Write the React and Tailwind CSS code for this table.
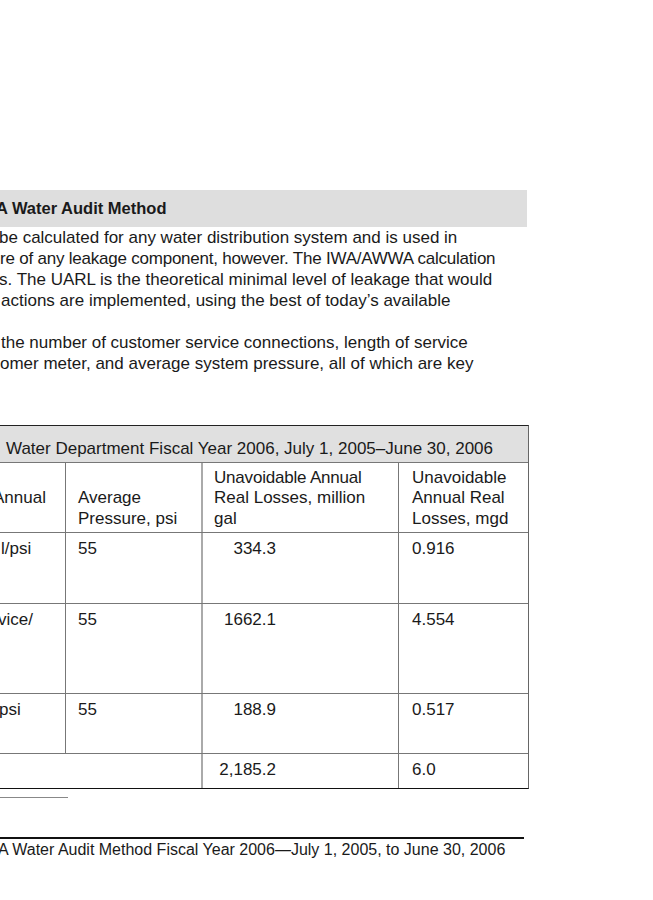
import React from "react";

const font = { fontFamily: '"Liberation Sans", Arial, sans-serif' };

function Line({ children, cls = "" }) {
  return (
    <div className={"h-[21px] leading-[21px] whitespace-nowrap " + cls}>{children}</div>
  );
}

export default function App() {
  return (
    <div
      className="w-[653px] h-[900px] bg-white overflow-hidden text-[#1a1a1a]"
      style={font}
    >
      <div className="pt-[190px]">
        {/* Heading bar */}
        <div className="w-[527px] h-[37px] bg-[#dedede] flex items-center overflow-hidden">
          <span className="ml-[-4px] text-[16.5px] font-bold whitespace-nowrap">
            A Water Audit Method
          </span>
        </div>

        {/* Body text */}
        <div className="text-[17px] overflow-hidden w-[653px]">
          <Line cls="ml-[-1px]">be calculated for any water distribution system and is used in</Line>
          <Line cls="tracking-[-0.22px]">re of any leakage component, however. The IWA/AWWA calculation</Line>
          <Line cls="ml-[-1px]">s. The UARL is the theoretical minimal level of leakage that would</Line>
          <Line cls="ml-[1px]">actions are implemented, using the best of today’s available</Line>
          <div className="h-[21px]" />
          <Line cls="ml-[1px]">the number of customer service connections, length of service</Line>
          <Line>omer meter, and average system pressure, all of which are key</Line>
        </div>

        {/* Table */}
        <div className="mt-[51px] w-[529px] text-[17px] leading-[20.5px] overflow-hidden">
          <div className="border-t border-t-[#222] border-r border-r-[#666] border-b-[1.5px] border-b-[#111]">
            {/* title row */}
            <div className="h-[37px] bg-[#e0e0e0] border-b border-b-[#777] pt-[13px] whitespace-nowrap leading-[20px]">
              <span className="ml-[6px]">Water Department Fiscal Year 2006, July 1, 2005–June 30, 2006</span>
            </div>
            {/* header row */}
            <div className="grid grid-cols-[65px_136px_197px_129px] h-[70px] border-b border-b-[#777]">
              <div className="flex flex-col justify-end pb-[3px] whitespace-nowrap">
                <span className="ml-[-7px]">Annual</span>
                <span>&nbsp;</span>
              </div>
              <div className="border-l border-l-[#777] flex flex-col justify-end pb-[3px] pl-[12px]">
                <span>Average</span>
                <span>Pressure, psi</span>
              </div>
              <div className="border-l-2 border-l-[#aaa] flex flex-col justify-end pb-[3px] pl-[11px] whitespace-nowrap">
                <span className="tracking-[-0.2px]">Unavoidable Annual</span>
                <span>Real Losses, million</span>
                <span>gal</span>
              </div>
              <div className="border-l border-l-[#777] flex flex-col justify-end pb-[3px] pl-[13px] whitespace-nowrap">
                <span>Unavoidable</span>
                <span>Annual Real</span>
                <span>Losses, mgd</span>
              </div>
            </div>
            {/* data rows */}
            {[
              { h: "h-[71px]", c1: "l/psi", m: "ml-[1px]", v: "334.3", d: "0.916" },
              { h: "h-[90px]", c1: "vice/", m: "ml-[-2px]", v: "1662.1", d: "4.554" },
              { h: "h-[60px]", c1: "psi", m: "ml-[-1px]", v: "188.9", d: "0.517" },
            ].map((r, i) => (
              <div
                key={i}
                className={"grid grid-cols-[65px_136px_197px_129px] border-b border-b-[#777] " + r.h}
              >
                <div className="pt-[6px] whitespace-nowrap">
                  <span className={"inline-block " + r.m}>{r.c1}</span>
                </div>
                <div className="border-l border-l-[#777] pt-[6px] pl-[12px]">55</div>
                <div className="border-l-2 border-l-[#aaa] pt-[6px] pl-[11px]">
                  <span className="inline-block w-[62px] text-right">{r.v}</span>
                </div>
                <div className="border-l border-l-[#777] pt-[6px] pl-[13px]">{r.d}</div>
              </div>
            ))}
            {/* total row */}
            <div className="grid grid-cols-[201px_197px_129px] h-[34px]">
              <div />
              <div className="border-l-2 border-l-[#aaa] pt-[6px] pl-[11px]">
                <span className="inline-block w-[62px] text-right">2,185.2</span>
              </div>
              <div className="border-l border-l-[#777] pt-[6px] pl-[13px]">6.0</div>
            </div>
          </div>
        </div>

        {/* footnote rule */}
        <div className="mt-[8px] w-[68px] h-px bg-[#888]" />

        {/* footer */}
        <div className="mt-[39px] w-[524px] h-[2px] bg-[#111]" />
        <div className="mt-[1px] text-[16px] leading-[20px] whitespace-nowrap overflow-hidden w-[653px]">
          <span className="inline-block ml-[-2px]">
            A Water Audit Method Fiscal Year 2006—July 1, 2005, to June 30, 2006
          </span>
        </div>
      </div>
    </div>
  );
}
